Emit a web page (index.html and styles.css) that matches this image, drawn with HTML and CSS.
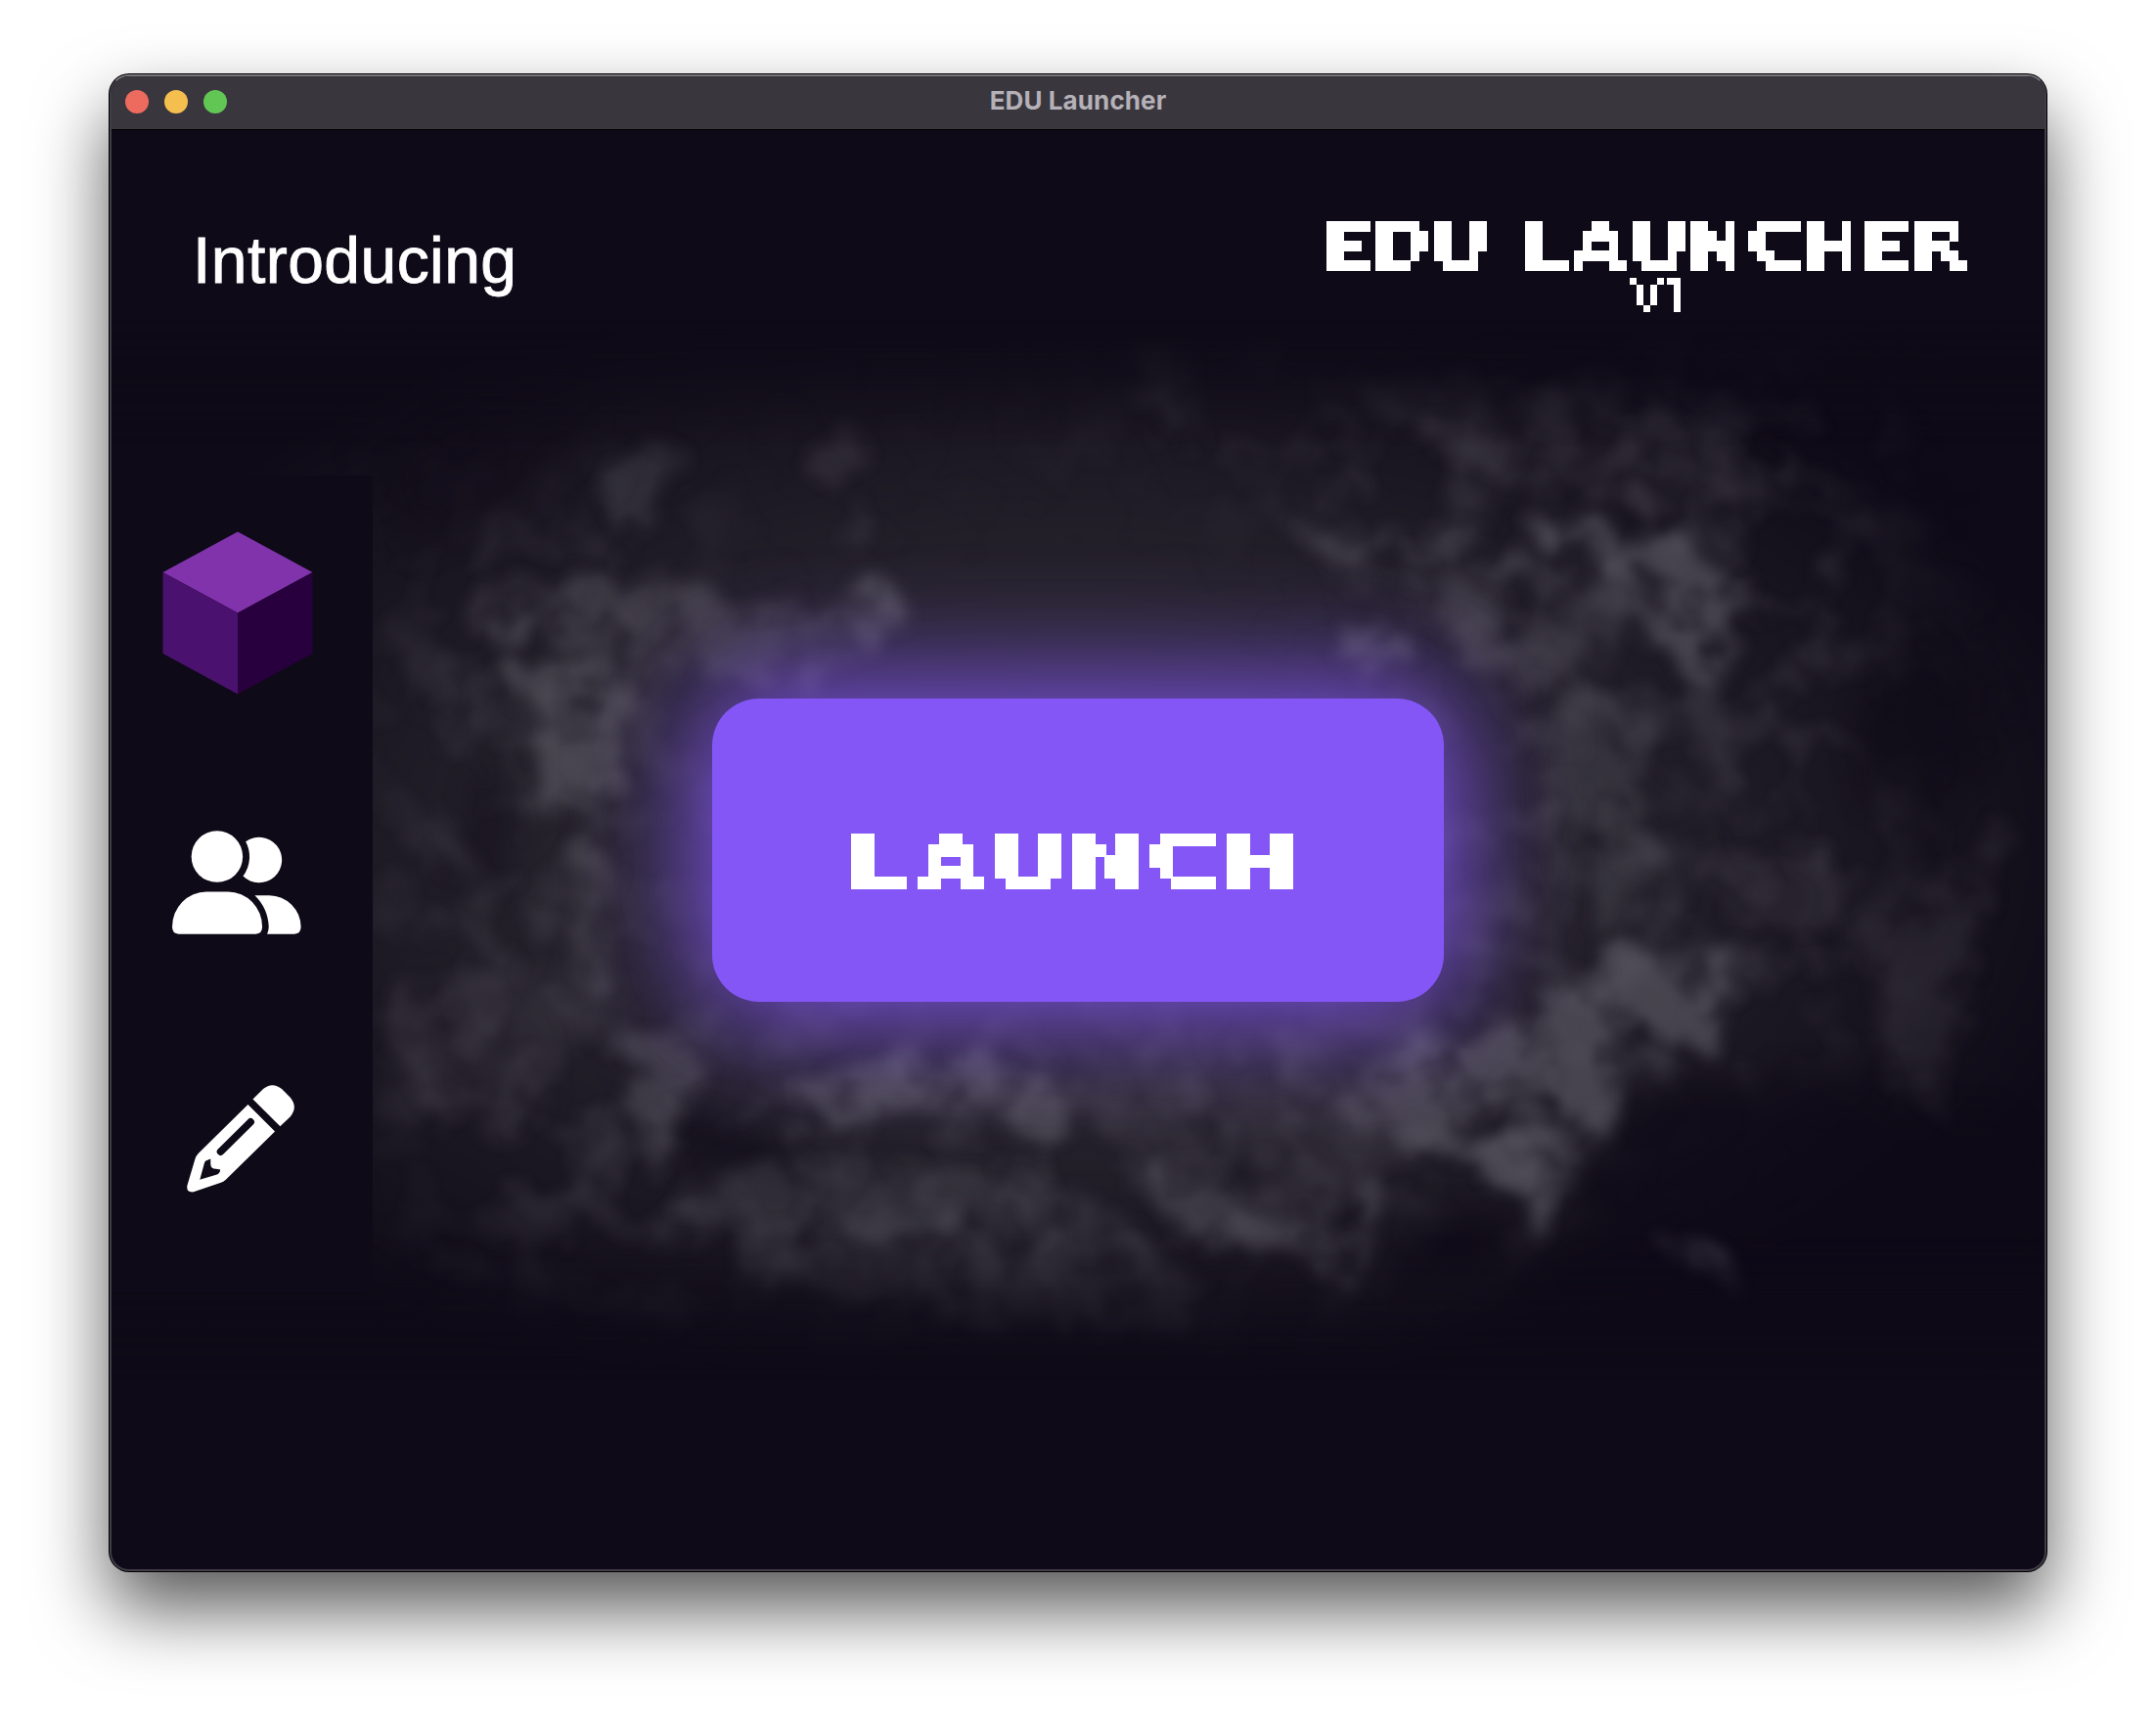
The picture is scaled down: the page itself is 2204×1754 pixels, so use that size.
FILE: index.html
```html
<!DOCTYPE html>
<html lang="en">
<head>
<meta charset="utf-8">
<title>EDU Launcher</title>
<link rel="stylesheet" href="styles.css">
</head>
<body>
<svg class="defs" width="0" height="0" aria-hidden="true">
  <filter id="pixel-large" x="0" y="0" width="100%" height="100%" primitiveUnits="userSpaceOnUse" color-interpolation-filters="sRGB">
    <feFlood x="5" y="5" width="1" height="1" flood-color="#fff" result="dot"/>
    <feOffset in="dot" x="0" y="0" width="11" height="11" dx="0" dy="0"/>
    <feTile result="dots"/>
    <feComposite in="SourceGraphic" in2="dots" operator="in"/>
    <feComponentTransfer><feFuncA type="discrete" tableValues="0 1"/></feComponentTransfer>
    <feMorphology operator="dilate" radius="6 6"/>
  </filter>
  <filter id="pixel-medium" x="0" y="0" width="100%" height="100%" primitiveUnits="userSpaceOnUse" color-interpolation-filters="sRGB">
    <feFlood x="4" y="5" width="1" height="1" flood-color="#fff" result="dot"/>
    <feOffset in="dot" x="0" y="0" width="9" height="10" dx="0" dy="0"/>
    <feTile result="dots"/>
    <feComposite in="SourceGraphic" in2="dots" operator="in"/>
    <feComponentTransfer><feFuncA type="discrete" tableValues="0 1"/></feComponentTransfer>
    <feMorphology operator="dilate" radius="4 5"/>
  </filter>
  <filter id="pixel-small" x="0" y="0" width="100%" height="100%" primitiveUnits="userSpaceOnUse" color-interpolation-filters="sRGB">
    <feFlood x="3" y="3" width="1" height="1" flood-color="#fff" result="dot"/>
    <feOffset in="dot" x="0" y="0" width="7" height="7" dx="0" dy="0"/>
    <feTile result="dots"/>
    <feComposite in="SourceGraphic" in2="dots" operator="in"/>
    <feComponentTransfer><feFuncA type="discrete" tableValues="0 1"/></feComponentTransfer>
    <feMorphology operator="dilate" radius="3 3"/>
  </filter>
</svg>

<div class="window">
  <div class="titlebar">
    <div class="lights"><span class="light red"></span><span class="light yellow"></span><span class="light green"></span></div>
    <div class="title">EDU Launcher</div>
  </div>

  <header class="header">
    <h1 class="intro">Introducing</h1>
    <div class="brand">
      <div class="brand-name"><span class="g n"><i>E</i></span><span class="g"><i>D</i></span><span class="g"><i>U</i></span><span class="sp"> </span><span class="g n"><i>L</i></span><span class="g"><i>A</i></span><span class="g"><i>U</i></span><span class="g"><i>N</i></span><span class="g c"><i>C</i></span><span class="g h"><i>H</i></span><span class="g n"><i>E</i></span><span class="g"><i>R</i></span></div>
      <div class="brand-version"><span class="v"><i>V</i></span><span class="v one"><i>1</i></span></div>
    </div>
  </header>

  <main class="stage">
    <svg class="smoke" viewBox="81 233 1406 771" preserveAspectRatio="none" aria-hidden="true">
      <defs>
        <filter id="rough" x="81" y="233" width="1406" height="771" filterUnits="userSpaceOnUse" color-interpolation-filters="sRGB">
          <feTurbulence type="fractalNoise" baseFrequency="0.03" numOctaves="3" seed="8" result="n"/>
          <feDisplacementMap in="SourceGraphic" in2="n" scale="44" xChannelSelector="R" yChannelSelector="G"/>
          <feGaussianBlur stdDeviation="5" result="shapes"/>
          <feTurbulence type="fractalNoise" baseFrequency="0.024" numOctaves="3" seed="5"/>
          <feColorMatrix values="0 0 0 0 1  0 0 0 0 1  0 0 0 0 1  2.4 0 0 0 -.4" result="grain"/>
          <feComposite in="shapes" in2="grain" operator="in"/>
          <feGaussianBlur stdDeviation="2.5"/>
        </filter>
        <filter id="shade" x="81" y="233" width="1406" height="771" filterUnits="userSpaceOnUse" color-interpolation-filters="sRGB">
          <feTurbulence type="fractalNoise" baseFrequency="0.03" numOctaves="3" seed="12" result="n"/>
          <feDisplacementMap in="SourceGraphic" in2="n" scale="60" xChannelSelector="R" yChannelSelector="G"/>
          <feGaussianBlur stdDeviation="9"/>
        </filter>
        <filter id="cloud" x="81" y="233" width="1406" height="771" filterUnits="userSpaceOnUse" color-interpolation-filters="sRGB">
          <feTurbulence type="fractalNoise" baseFrequency="0.022" numOctaves="4" seed="21"/>
          <feColorMatrix values="0 0 0 0 .42  0 0 0 0 .41  0 0 0 0 .45  3 0 0 0 -1.35"/>
          <feGaussianBlur stdDeviation="3"/>
        </filter>
        <filter id="soft" x="-30%" y="-30%" width="160%" height="160%"><feGaussianBlur stdDeviation="40"/></filter>
        <radialGradient id="base" cx=".49" cy=".5" r=".56">
          <stop offset="0" stop-color="#36333b"/><stop offset=".4" stop-color="#28252e"/><stop offset=".7" stop-color="#1c1823"/><stop offset="1" stop-color="#0e0a17"/>
        </radialGradient>
        <linearGradient id="fade" x1="0" y1="0" x2="0" y2="1">
          <stop offset="0" stop-color="#000"/><stop offset=".12" stop-color="#fff"/><stop offset=".86" stop-color="#fff"/><stop offset="1" stop-color="#000"/>
        </linearGradient>
        <mask id="edges"><rect x="81" y="233" width="1406" height="771" fill="url(#fade)"/></mask>
        <mask id="ring"><path filter="url(#soft)" fill="#fff" fill-rule="evenodd" d="M290 380L700 330L900 260L1330 260L1400 520L1370 720L1200 860L900 950L420 930L280 850ZM500 360L900 320L1010 480L990 720L530 720Z"/></mask>
      </defs>
      <rect x="81" y="233" width="1406" height="771" fill="#0e0a17"/>
      <g mask="url(#edges)">
        <rect x="81" y="233" width="1406" height="771" fill="url(#base)"/>
        <g mask="url(#ring)"><rect x="81" y="233" width="1406" height="771" filter="url(#cloud)" opacity=".26"/></g>
        <g filter="url(#shade)" fill="#0e0a17" opacity=".7">
          <path d="M490 810L560 830L580 865L490 860Z" opacity=".7"/>
          <path d="M1370 470L1440 500L1420 600L1350 590Z" opacity=".8"/>
          <path d="M1010 880L1100 880L1090 930L1000 920Z"/>
          <path d="M1180 800L1300 780L1500 830L1480 1010L1020 1010L1140 900Z"/>
          <path d="M340 560L380 590L370 650L330 640Z" opacity=".5"/>
          <path d="M280 400L340 390L430 330L420 300L280 320Z" opacity=".4"/>
        </g>
        <g filter="url(#rough)" fill="#74717b">
          <g opacity=".48">
            <path d="M440 350Q450 315 485 320Q510 330 490 345Q478 370 476 385L450 390Z" opacity=".5"/>
            <path d="M592 325Q608 290 630 320L632 345H596Z" opacity=".4"/>
            <ellipse cx="619" cy="380" rx="8" ry="18" opacity=".5"/>
            <path d="M340 440Q370 405 400 430Q430 400 460 425Q500 410 520 440L560 430L600 450Q630 410 665 440Q665 470 620 465L585 505L540 500L510 480L460 495L430 475L400 465L350 465Z" opacity=".65"/>
            <path d="M368 485L455 470L460 520L450 590L430 600L395 580Z" opacity=".9"/>
            <path d="M380 650L440 600L448 740L430 720L410 660L390 690Z" opacity=".55"/>
            <path d="M450 740L520 770L495 830L478 850L460 800Z" opacity=".75"/>
            <path d="M280 720L400 700L440 750L370 830L290 790Z" opacity=".35"/>
            <path d="M570 795Q630 770 680 765Q740 760 780 805L760 840L720 810L600 815Z" opacity=".9"/>
            <path d="M490 870L600 840L720 850L820 890L880 940L860 975L700 960L560 930Z" opacity=".5"/>
            <path d="M820 840Q850 845 870 870L950 885L1010 850L1000 900L985 940L930 915L860 890Z" opacity=".75"/>
            <path d="M950 390L1080 385L1060 405L960 405Z" opacity=".8"/>
            <path d="M1115 370L1160 368L1190 395L1240 400L1275 430L1260 480L1235 500L1205 470L1185 420L1130 400Z"/>
            <path d="M1030 420L1110 400L1150 430L1190 420L1180 480L1120 500L1060 480Z" opacity=".6"/>
            <path d="M1115 520L1160 500L1210 530L1190 600L1220 660L1170 680L1130 630Z" opacity=".5"/>
            <path d="M1100 740L1180 690L1265 700L1240 760L1190 770L1150 850L1130 900L1110 870L1040 845L980 820L960 780Z"/>
            <path d="M780 770L980 750L1040 840L960 885L840 860L790 820Z" opacity=".35"/>
            <path d="M1230 620L1330 620L1340 680L1250 670Z" opacity=".35"/>
            <path d="M1350 690L1460 600L1440 700L1410 820L1370 770Z" opacity=".35"/>
            <path d="M1010 320L1120 280L1220 300L1290 350L1250 380L1130 360L1080 340Z" opacity=".4"/>
            <path d="M820 250L870 260L880 310L840 310Z" opacity=".3"/>
            <path d="M1205 905L1230 905L1265 935L1225 930Z" opacity=".8"/>
            <path d="M300 900L420 930L560 950L500 960L320 930Z" opacity=".2"/>
            <ellipse cx="325" cy="512" rx="10" ry="20" opacity=".5"/>
            <ellipse cx="1000" cy="472" rx="25" ry="16" opacity=".9"/>
            <ellipse cx="640" cy="450" rx="26" ry="20"/>
          </g>
        </g>
      </g>
    </svg>

    <nav class="sidebar">
      <a class="item cube" aria-label="Games">
        <svg width="154" height="167" viewBox="0 0 154 167"><path fill="#8033ab" d="M77 .5L153.500 42L77 83.500L.5 42Z"/><path fill="#4b116f" d="M.5 42L77 83.500V166.500L.5 125Z"/><path fill="#29003e" d="M153.500 42L77 83.500V166.500L153.500 125Z"/></svg>
      </a>
      <a class="item users" aria-label="Accounts">
        <svg width="132" height="106" viewBox="198 116 397 319" fill="#fff"><circle cx="336" cy="196" r="79"/><path d="M424 150A70 70 0 1 1 416 256A99 99 0 0 0 424 150Z"/><path d="M303 304H370A105 108 0 0 1 475 412Q475 434 455 434H218Q198 434 198 412A105 108 0 0 1 303 304Z"/><path d="M452 315H497A98 98 0 0 1 594 412Q594 434 574 434H490Q495 425 495 412Q493 355 452 315Z"/></svg>
      </a>
      <a class="item pencil" aria-label="Edit">
        <svg width="110" height="110" viewBox="243 86 331 331"><g fill="#fff"><path d="M446 130L478 98Q506 75 535 98L561 124Q586 154 561 184L530 213Z"/><path d="M431 146L514 229L363 377Q356 384 346 387L264 415Q241 418 244 396L268 315Q271 304 279 296Z"/></g><path d="M347 291L439 200" stroke="#0e0a17" stroke-width="23" stroke-linecap="round"/><path fill="#0e0a17" d="M300 320L316 313V328Q316 344 332 344L346 346Q345 357 336 361L283 377L297 326Z"/></svg>
      </a>
    </nav>

    <button class="launch"><span class="launch-text"><span class="g n"><i>L</i></span><span class="g"><i>A</i></span><span class="g"><i>U</i></span><span class="g"><i>N</i></span><span class="g c"><i>C</i></span><span class="g h"><i>H</i></span></span></button>
  </main>
</div>
</body>
</html>
```
FILE: styles.css
```css
* { box-sizing: border-box; }

body {
  margin: 0;
  padding: 76px 112px 148px;
  background: #fff;
  font-family: "Liberation Sans", Arial, sans-serif;
  overflow: hidden;
}

.defs { position: absolute; }

.window {
  height: 1530px;
  border: 2px solid #403c48;
  border-top-color: #77747a;
  border-radius: 20px;
  background: #0e0a17;
  overflow: hidden;
  box-shadow: 0 0 0 1px #000, 0 38px 76px rgba(0, 0, 0, .66);
}

.titlebar {
  display: grid;
  grid-template-columns: 1fr auto 1fr;
  align-items: center;
  height: 55px;
  padding: 0 14px 3px;
  background: #3a363d;
  border-bottom: 1px solid #000;
}

.lights { display: flex; gap: 16px; }
.light { width: 24px; height: 24px; border-radius: 50%; }
.red { background: #ed6a5f; }
.yellow { background: #f5bf4f; }
.green { background: #62c655; }

.title {
  padding-bottom: 2px;
  color: #b5b1b8;
  font: 700 26px/32px Inter, "Liberation Sans", sans-serif;
  letter-spacing: .1px;
}

.header {
  display: flex;
  justify-content: space-between;
  height: 194px;
  padding: 93px 80px 0 83px;
}

.intro {
  margin: 0;
  padding-top: 2px;
  color: #fff;
  font-size: 66px;
  font-weight: 400;
  line-height: 76px;
  letter-spacing: .45px;
  -webkit-text-stroke: .9px #fff;
}

.brand {
  display: flex;
  flex-direction: column;
  gap: 8px;
  width: 654px;
  color: #fff;
}

.g, .v { display: block; }

.g i, .v i {
  display: block;
  width: max-content;
  font-family: "DejaVu Sans Mono", monospace;
  font-style: normal;
  font-weight: 700;
  transform-origin: 0 0;
}

.brand-name { display: flex; gap: 6px; height: 50px; }
.brand-name .g { width: 54px; height: 50px; filter: url(#pixel-medium); }
.brand-name .g.n { width: 45px; }
.brand-name .g i { font-size: 68px; line-height: 50px; transform: scaleX(1.4) translateX(-2px); }
.brand-name .g.n i { transform: scaleX(1.3) translateX(-5px); }
.brand-name .g.c i { transform: scaleX(1.64) translateX(-4px); }
.brand-name .g.h i { transform: scaleX(1.52) translateX(-4px); }
.brand-name .sp { width: 28px; white-space: pre; }

.brand-version { display: flex; gap: 3px; padding-left: 310px; }
.brand-version .v { width: 35px; height: 35px; filter: url(#pixel-small); }
.brand-version .v.one { width: 14px; }
.brand-version .v i { font-family: "Liberation Sans", sans-serif; font-size: 49px; line-height: 35px; transform: scaleX(1.06); }
.brand-version .v.one i { font-family: Roboto, sans-serif; transform: translateX(-5px); }

.stage { display: grid; height: 1084px; }
.stage > * { grid-area: 1 / 1; }

.smoke { display: block; width: 100%; height: 1084px; }

.sidebar {
  position: relative;
  display: flex;
  flex-direction: column;
  width: 267px;
  height: 835px;
  margin-top: 159px;
  padding: 57px 0 0 52px;
  background: #0e0a17;
}

.item { display: block; }
.item svg { display: block; }
.users { margin: 139px 0 0 10px; }
.pencil { margin: 154px 0 0 25px; }

.launch {
  place-self: center;
  position: relative;
  display: flex;
  align-items: center;
  justify-content: center;
  width: 748px;
  height: 310px;
  padding: 22px 12px 0 0;
  border: 0;
  border-radius: 48px;
  background: #8456f6;
  box-shadow: 0 0 120px 14px rgba(132, 86, 246, .92);
  color: #fff;
}

.launch-text { display: flex; gap: 13px; }
.launch .g { width: 66px; height: 55px; text-align: left; filter: url(#pixel-large); }
.launch .g.n { width: 55px; }
.launch .g i { font-size: 76px; line-height: 55px; transform: scaleX(1.52) translateX(-1px); }
.launch .g.n i { transform: scaleX(1.5) translateX(-6px); }
.launch .g.c i { transform: scaleX(1.8) translateX(-4px); }
.launch .g.h i { transform: scaleX(1.65) translateX(-3px); }
```
